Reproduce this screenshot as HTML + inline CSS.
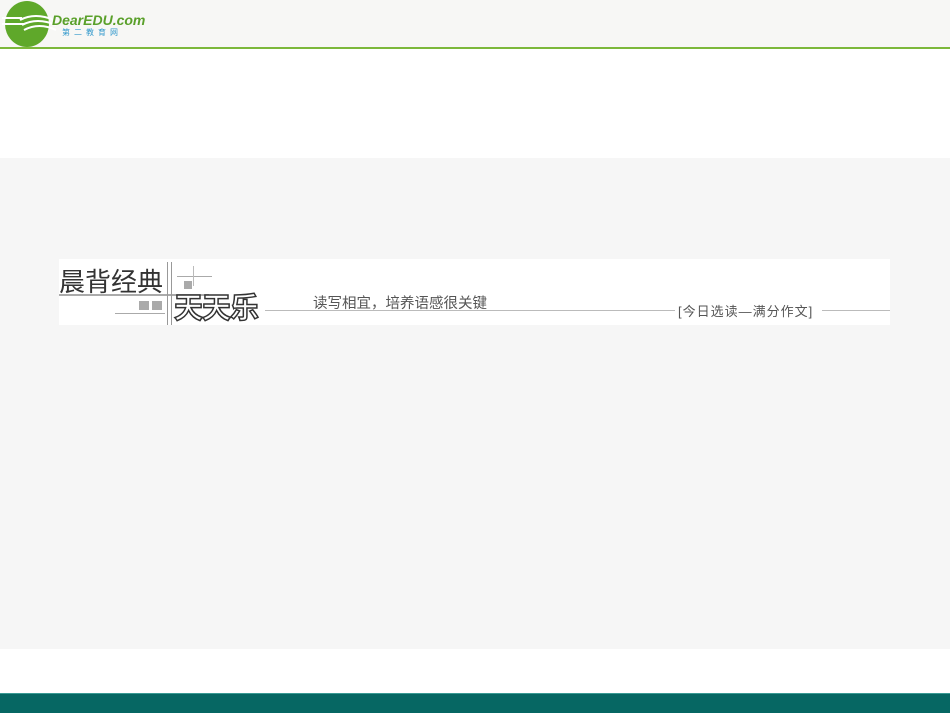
<!DOCTYPE html>
<html><head><meta charset="utf-8"><style>
body{margin:0;width:950px;height:713px;position:relative;background:#fff;overflow:hidden;font-family:"Liberation Sans","Noto Sans CJK SC",sans-serif}
.a{position:absolute;white-space:nowrap}
</style></head><body>
<div class="a" style="left:0;top:0;width:950px;height:47px;background:#f7f7f5"></div>
<div class="a" style="left:0;top:47px;width:950px;height:2px;background:#7cb83a"></div>
<div class="a" style="left:5px;top:1px;width:44px;height:46px;border-radius:50%;background:#5fa82a"></div>
<svg class="a" style="left:0;top:8px" width="60" height="30"><path d="M2 10h20M2 16h22M20 12q15-8 34 0M22 17q15-8 34 0M24 22q15-8 32 0" stroke="#fff" stroke-width="2" fill="none"/></svg>
<div class="a" style="left:52px;top:12px;font-size:14px;font-weight:bold;font-style:italic;color:#5aa02a">DearEDU.com</div>
<div class="a" style="left:62px;top:27px;font-size:8px;color:#39c;letter-spacing:4px">第二教育网</div>
<div class="a" style="left:0;top:158px;width:950px;height:491px;background:#f6f6f6"></div>
<div class="a" style="left:59px;top:259px;width:831px;height:66px;background:#fff;overflow:hidden">
<div class="a" style="left:0;top:3px;font-size:26px;color:#333">晨背经典</div>
<div class="a" style="left:0;top:35px;width:150px;height:2px;background:#aaa"></div>
<div class="a" style="left:56px;top:54px;width:50px;height:1px;background:#aaa"></div>
<div class="a" style="left:80px;top:42px;width:10px;height:9px;background:#aaa"></div>
<div class="a" style="left:93px;top:42px;width:10px;height:9px;background:#aaa"></div>
<div class="a" style="left:108px;top:3px;width:1px;height:63px;background:#999"></div>
<div class="a" style="left:112px;top:3px;width:1px;height:63px;background:#999"></div>
<div class="a" style="left:118px;top:17px;width:35px;height:1px;background:#aaa"></div>
<div class="a" style="left:125px;top:22px;width:8px;height:8px;background:#aaa"></div>
<div class="a" style="left:134px;top:7px;width:1px;height:20px;background:#bbb"></div>
<div class="a" style="left:115px;top:33px;font-size:29px;line-height:34px;font-weight:bold;color:#fff;-webkit-text-stroke:1.5px #333;letter-spacing:-1px">天天乐</div>
<div class="a" style="left:206px;top:51px;width:410px;height:1px;background:#bbb"></div>
<div class="a" style="left:254px;top:33px;font-size:14.5px;color:#555">读写相宜，培养语感很关键</div>
<div class="a" style="left:619px;top:42px;font-size:13px;color:#555;letter-spacing:1px">[今日选读—满分作文]</div>
<div class="a" style="left:763px;top:51px;width:68px;height:1px;background:#bbb"></div>
</div>
<div class="a" style="left:0;top:693px;width:950px;height:1px;background:#3a9a94"></div>
<div class="a" style="left:0;top:694px;width:950px;height:19px;background:#066763"></div>
</body></html>
